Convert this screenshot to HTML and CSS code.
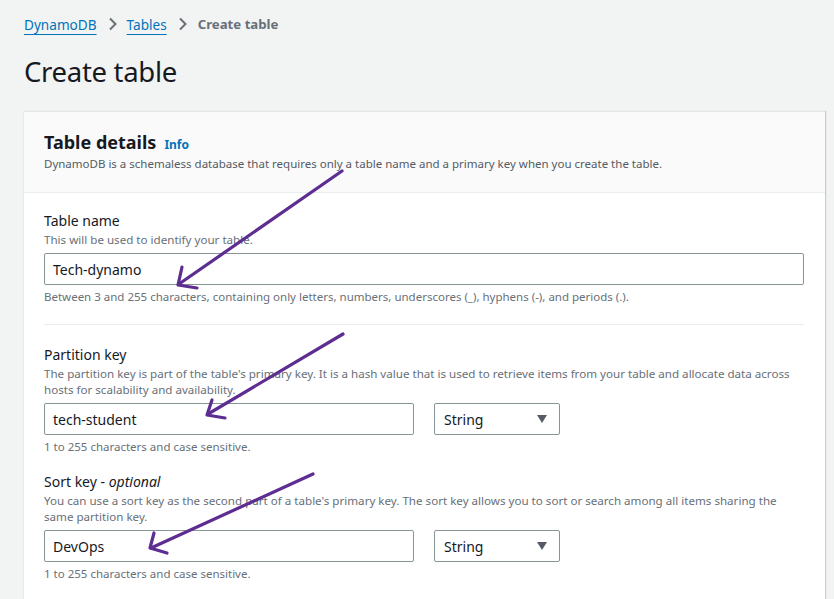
FILE: index.html
```html
<!DOCTYPE html>
<html>
<head>
<meta charset="utf-8">
<link rel="stylesheet" href="styles.css">
</head>
<body>
<div class="page">
  <nav class="crumbs">
    <a class="crumb-link">DynamoDB</a>
    <svg class="chev" width="10" height="14" viewBox="0 0 10 14"><path d="M2 1.5 L7.5 7 L2 12.5" fill="none" stroke="#687078" stroke-width="2"/></svg>
    <a class="crumb-link">Tables</a>
    <svg class="chev" width="10" height="14" viewBox="0 0 10 14"><path d="M2 1.5 L7.5 7 L2 12.5" fill="none" stroke="#687078" stroke-width="2"/></svg>
    <span class="crumb-current">Create table</span>
  </nav>
  <h1 class="title">Create table</h1>
  <section class="card">
    <header class="card-head">
      <h2 class="card-title">Table details <span class="info">Info</span></h2>
      <p class="card-desc">DynamoDB is a schemaless database that requires only a table name and a primary key when you create the table.</p>
    </header>
    <div class="card-body">
      <div class="field">
        <div class="label">Table name</div>
        <div class="desc">This will be used to identify your table.</div>
        <div class="input full">Tech-dynamo</div>
        <div class="hint">Between 3 and 255 characters, containing only letters, numbers, underscores (_), hyphens (-), and periods (.).</div>
      </div>
      <hr class="divider">
      <div class="field">
        <div class="label">Partition key</div>
        <div class="desc">The partition key is part of the table's primary key. It is a hash value that is used to retrieve items from your table and allocate data across hosts for scalability and availability.</div>
        <div class="row">
          <div class="input key">tech-student</div>
          <div class="select">String <span class="caret"></span></div>
        </div>
        <div class="hint">1 to 255 characters and case sensitive.</div>
      </div>
      <div class="field second">
        <div class="label">Sort key - <i>optional</i></div>
        <div class="desc">You can use a sort key as the second part of a table's primary key. The sort key allows you to sort or search among all items sharing the same partition key.</div>
        <div class="row">
          <div class="input key">DevOps</div>
          <div class="select">String <span class="caret"></span></div>
        </div>
        <div class="hint">1 to 255 characters and case sensitive.</div>
      </div>
    </div>
  </section>
  <svg class="arrows" width="834" height="599" viewBox="0 0 834 599">
    <g fill="none" stroke="#5d2d91" stroke-width="3.2" stroke-linecap="round" stroke-linejoin="round">
      <path d="M342 171 L179 284"/>
      <path d="M182 267 L178 285 L197 288"/>
      <path d="M343 334 L208 414"/>
      <path d="M212 400 L207 415 L225 418"/>
      <path d="M313 474 L151 548"/>
      <path d="M154 533 L150 548 L167 553"/>
    </g>
  </svg>
</div>
</body>
</html>
```
FILE: styles.css
```css
* { box-sizing: border-box; }
html, body { margin: 0; padding: 0; }
body {
  background: #f2f3f3;
  font-family: "Noto Sans", "Open Sans", sans-serif;
  color: #16191f;
  width: 834px;
  height: 599px;
  overflow: hidden;
}
.page { position: relative; padding: 14px 10px 0 24px; }
.crumbs { display: flex; align-items: center; height: 20px; font-size: 13.6px; }
.crumb-link {
  color: #0073bb;
  text-decoration: underline;
  text-underline-offset: 4px;
  text-decoration-thickness: 1px;
}
.chev { margin: 0 9px 0 11px; }
.crumb-current { color: #687078; font-weight: 700; font-size: 13.2px; margin-left: 1px; }
.title {
  margin: 20px 0 0 0;
  font-size: 27.5px;
  font-weight: 400;
  line-height: 36px;
  letter-spacing: -0.3px;
}
.card {
  margin-top: 21px;
  width: 801px;
  background: #fff;
  border-top: 1px solid #e4e7e7;
  box-shadow: 1px 0 1px 0 #c8cccc, -1px 0 0 0 #e8eaea;
}
.card-head {
  background: #fafafa;
  border-bottom: 1px solid #eaeded;
  padding: 17px 20px 19px 20px;
}
.card-title { margin: 0; font-size: 18px; font-weight: 700; line-height: 26px; display: flex; align-items: baseline; gap: 8px; }
.info { color: #0073bb; font-size: 12px; font-weight: 700; }
.card-desc { margin: -3px 0 0 0; font-size: 11.5px; color: #545b64; line-height: 18px; }
.card-body { padding: 18px 20px 20px 20px; }
.field { display: flex; flex-direction: column; }
.label { font-size: 14px; line-height: 20px; }
.desc { font-size: 11.6px; line-height: 16px; color: #687078; margin-top: 1px; margin-bottom: 5px; }
.input {
  height: 32px;
  border: 1px solid #879596;
  border-radius: 2px;
  padding: 0 8px;
  font-size: 14px;
  display: flex;
  align-items: center;
  color: #16191f;
}
.full { width: 760px; }
.hint { font-size: 11.5px; line-height: 16px; color: #687078; margin-top: 4px; }
.divider { border: 0; border-top: 1px solid #eaeded; margin: 19px 0 20px 0; width: 760px; }
.row { display: flex; gap: 20px; }
.key { width: 370px; }
.select {
  width: 126px;
  height: 32px;
  border: 1px solid #879596;
  border-radius: 2px;
  padding: 0 10px 0 9px;
  font-size: 14px;
  display: flex;
  align-items: center;
  justify-content: space-between;
}
.caret {
  width: 0; height: 0;
  border-left: 5px solid transparent;
  border-right: 5px solid transparent;
  border-top: 8px solid #545b64;
  margin-right: 2px;
}
.second { margin-top: 17px; }
.arrows { position: absolute; left: 0; top: 0; pointer-events: none; }
```
